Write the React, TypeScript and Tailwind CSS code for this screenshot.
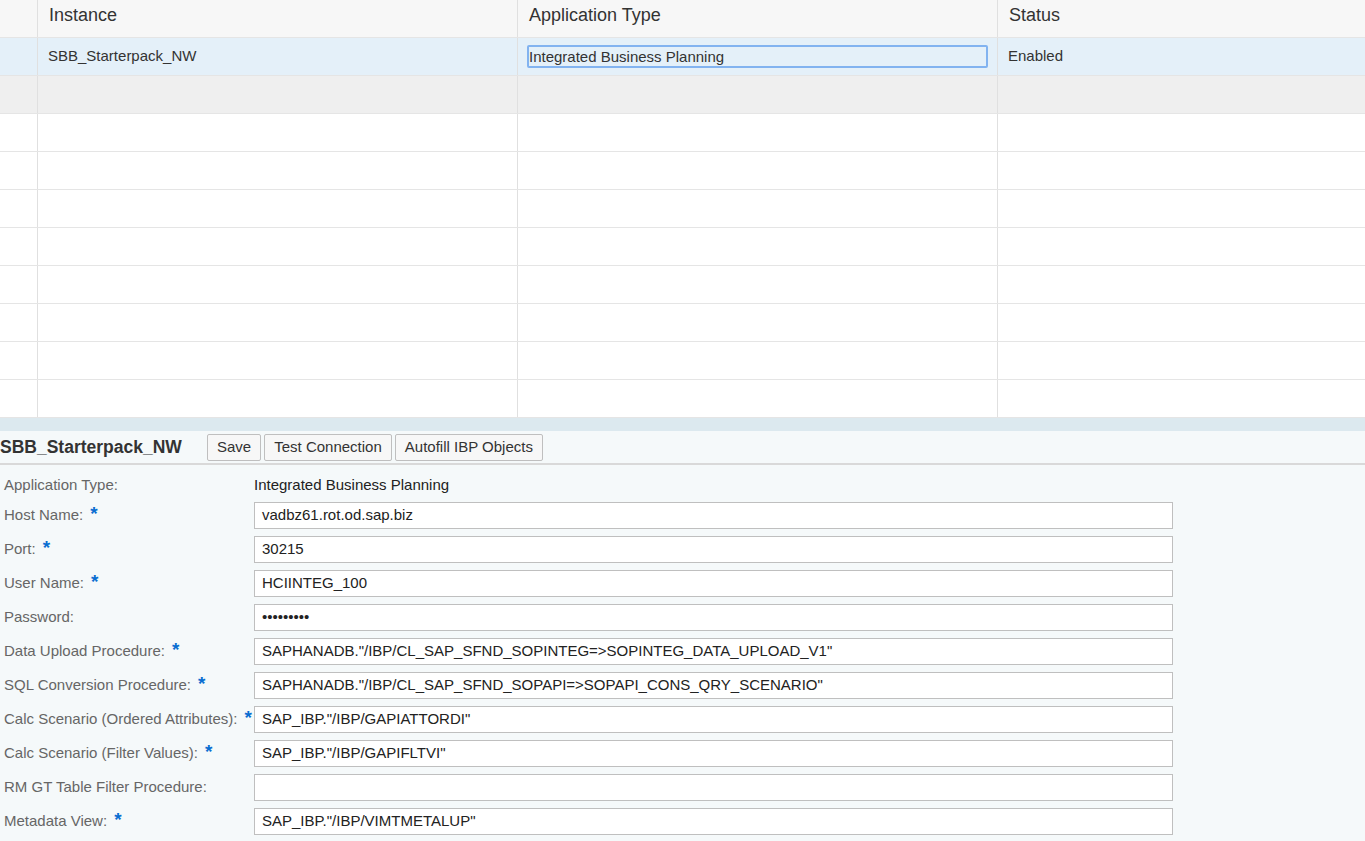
import React from 'react';

const emptyRows = Array.from({ length: 8 });

interface Field {
    label: string;
    required: boolean;
    value: string;
}

const fields: Field[] = [
    { label: 'Host Name:', required: true, value: 'vadbz61.rot.od.sap.biz' },
    { label: 'Port:', required: true, value: '30215' },
    { label: 'User Name:', required: true, value: 'HCIINTEG_100' },
    { label: 'Password:', required: false, value: '•••••••••' },
    { label: 'Data Upload Procedure:', required: true, value: 'SAPHANADB."/IBP/CL_SAP_SFND_SOPINTEG=>SOPINTEG_DATA_UPLOAD_V1"' },
    { label: 'SQL Conversion Procedure:', required: true, value: 'SAPHANADB."/IBP/CL_SAP_SFND_SOPAPI=>SOPAPI_CONS_QRY_SCENARIO"' },
    { label: 'Calc Scenario (Ordered Attributes):', required: true, value: 'SAP_IBP."/IBP/GAPIATTORDI"' },
    { label: 'Calc Scenario (Filter Values):', required: true, value: 'SAP_IBP."/IBP/GAPIFLTVI"' },
    { label: 'RM GT Table Filter Procedure:', required: false, value: '' },
    { label: 'Metadata View:', required: true, value: 'SAP_IBP."/IBP/VIMTMETALUP"' },
];

const App: React.FC = () => {
    return (
        <div className="w-[1365px] h-[841px] overflow-hidden bg-white text-[#333] font-['Liberation_Sans',Arial,sans-serif]">
            {/* table */}
            <div className="flex h-[38px] bg-[#f7f7f7] border-b border-[#e5e5e5] text-[18px] text-[#333]">
                <div className="w-[38px] border-r border-[#e0e0e0] shrink-0" />
                <div className="w-[480px] border-r border-[#e0e0e0] pl-[11px] pt-[2px] shrink-0">Instance</div>
                <div className="w-[480px] border-r border-[#e0e0e0] pl-[11px] pt-[2px] shrink-0">Application Type</div>
                <div className="flex-1 pl-[11px] pt-[2px]">Status</div>
            </div>
            <div className="flex h-[38px] bg-[#e4f0f9] border-b border-[#e5e5e5] text-[15px] text-[#333]">
                <div className="w-[38px] border-r border-[#e0e0e0] shrink-0" />
                <div className="w-[480px] border-r border-[#e0e0e0] pl-[10px] flex items-center shrink-0">SBB_Starterpack_NW</div>
                <div className="w-[480px] border-r border-[#e0e0e0] pl-[9px] pr-[9px] flex items-center shrink-0">
                    <div className="w-full h-[23px] border-2 border-[#82b3f0] rounded-[2px] flex items-center leading-none">Integrated Business Planning</div>
                </div>
                <div className="flex-1 pl-[10px] flex items-center">Enabled</div>
            </div>
            <div className="flex h-[38px] bg-[#efefef] border-b border-[#e5e5e5]">
                <div className="w-[38px] border-r border-[#e0e0e0] shrink-0" />
                <div className="w-[480px] border-r border-[#e0e0e0] shrink-0" />
                <div className="w-[480px] border-r border-[#e0e0e0] shrink-0" />
                <div className="flex-1" />
            </div>
            {emptyRows.map((_, i) => (
                <div key={i} className="flex h-[38px] bg-white border-b border-[#e5e5e5] last:border-b-0">
                    <div className="w-[38px] border-r border-[#e0e0e0] shrink-0" />
                    <div className="w-[480px] border-r border-[#e0e0e0] shrink-0" />
                    <div className="w-[480px] border-r border-[#e0e0e0] shrink-0" />
                    <div className="flex-1" />
                </div>
            ))}

            {/* splitter */}
            <div className="h-[13px] bg-[#dce9ef]" />

            {/* toolbar */}
            <div className="h-[34px] bg-[#f5f9fa] flex items-center border-b-2 border-[#d9d9d9]">
                <div className="text-[17.5px] font-bold text-[#333] w-[207px] shrink-0">SBB_Starterpack_NW</div>
                <div className="flex gap-[3px]">
                    <button className="h-[27px] px-[9px] border border-[#bfbfbf] rounded-[2px] bg-[#f7f7f7] text-[15px] text-[#333]">Save</button>
                    <button className="h-[27px] px-[9px] border border-[#bfbfbf] rounded-[2px] bg-[#f7f7f7] text-[15px] text-[#333]">Test Connection</button>
                    <button className="h-[27px] px-[9px] border border-[#bfbfbf] rounded-[2px] bg-[#f7f7f7] text-[15px] text-[#333]">Autofill IBP Objects</button>
                </div>
            </div>

            {/* form */}
            <div className="bg-[#f5f9fa] h-[400px] pt-[10px]">
                <div className="flex h-[21px] items-center text-[15px]">
                    <div className="w-[254px] pl-[4px] text-[#666] shrink-0">Application Type:</div>
                    <div className="text-[#222]">Integrated Business Planning</div>
                </div>
                <div className="flex flex-col gap-[7px] mt-[6px]">
                    {fields.map((f) => (
                        <div key={f.label} className="flex h-[27px] items-center text-[15px]">
                            <div className="w-[254px] pl-[4px] text-[#666] shrink-0 whitespace-nowrap flex items-center">
                                {f.label}
                                {f.required && <span className="text-[#0a6ed1] font-bold text-[19px] ml-[7px] leading-none relative top-[-2px]">*</span>}
                            </div>
                            <div className="w-[919px] h-[27px] border border-[#bfbfbf] bg-white pl-[7px] flex items-center text-[#222] whitespace-nowrap overflow-hidden">
                                {f.value}
                            </div>
                        </div>
                    ))}
                </div>
            </div>
        </div>
    );
};

export default App;
